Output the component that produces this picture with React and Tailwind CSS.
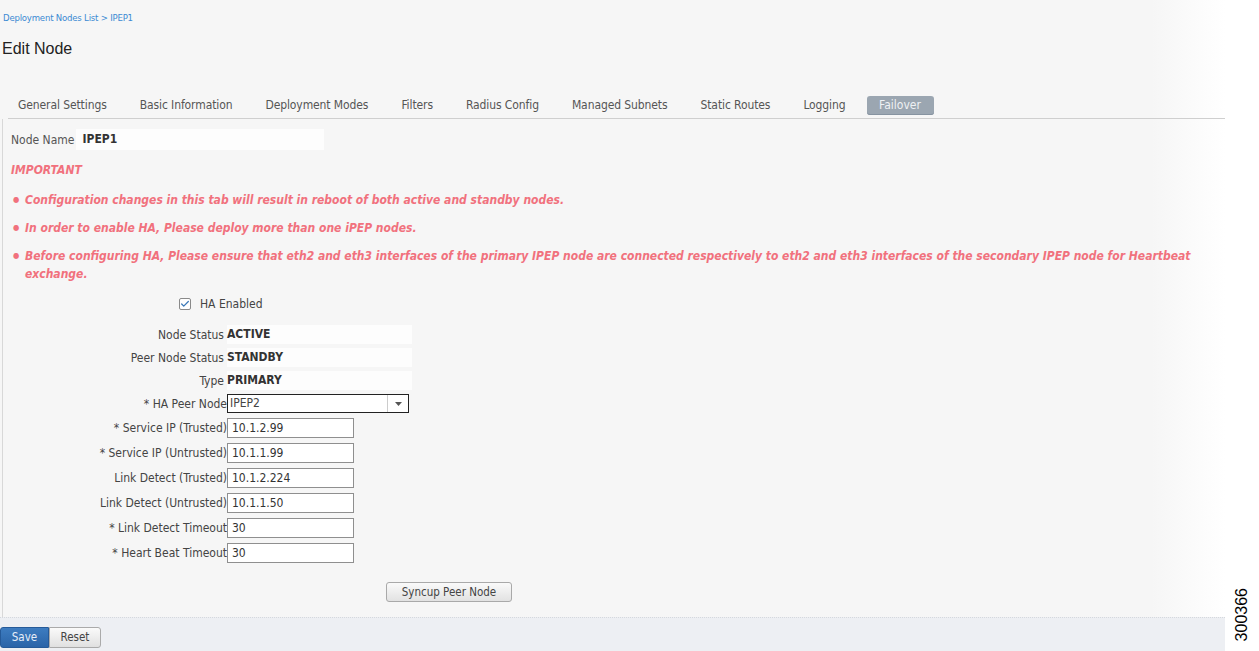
import { Check } from "lucide-react";

const tabs = [
  "General Settings",
  "Basic Information",
  "Deployment Modes",
  "Filters",
  "Radius Config",
  "Managed Subnets",
  "Static Routes",
  "Logging",
];

const notes = [
  "Configuration changes in this tab will result in reboot of both active and standby nodes.",
  "In order to enable HA, Please deploy more than one iPEP nodes.",
  "Before configuring HA, Please ensure that eth2 and eth3 interfaces of the primary IPEP node are connected respectively to eth2 and eth3 interfaces of the secondary IPEP node for Heartbeat exchange.",
];

const statusRows = [
  ["Node Status", "ACTIVE"],
  ["Peer Node Status", "STANDBY"],
  ["Type", "PRIMARY"],
];

const inputRows = [
  ["* Service IP (Trusted)", "10.1.2.99"],
  ["* Service IP (Untrusted)", "10.1.1.99"],
  ["Link Detect (Trusted)", "10.1.2.224"],
  ["Link Detect (Untrusted)", "10.1.1.50"],
  ["* Link Detect Timeout", "30"],
  ["* Heart Beat Timeout", "30"],
];

const font = { fontFamily: '"DejaVu Sans Condensed", "DejaVu Sans", sans-serif' };

export default function App() {
  return (
    <div
      className="w-[1259px] h-[651px] overflow-hidden flex bg-white text-[12px] text-[#444]"
      style={font}
    >
      <div className="flex-1 flex flex-col bg-[linear-gradient(to_right,#f6f6f6_0%,#f6f6f6_94%,#ffffff_100%)]">
        <div className="pl-[3px] pt-[11px] text-[9.5px] text-[#3b8ad3] tracking-[-0.2px]">
          Deployment Nodes List &gt; IPEP1
        </div>
        <h1
          className="pl-[2px] mt-[16px] text-[16px] text-[#222] leading-none"
          style={{ fontFamily: '"Liberation Sans", Arial, sans-serif' }}
        >
          Edit Node
        </h1>

        <div className="mt-[39px] ml-[8px] pl-[10px] flex items-end gap-[33px] border-b border-[#cfcfcf] h-[23px]">
          {tabs.map((t) => (
            <div key={t} className="h-[19px] leading-[19px] text-[12px] text-[#555] mb-[3px] tracking-[-0.1px]">
              {t}
            </div>
          ))}
          <div className="-ml-[12px] w-[67px] text-center h-[19px] leading-[19px] mb-[3px] rounded-[3px] bg-[#9ba6b1] text-[12px] text-[#eef1f4] shadow-[inset_0_-1px_0_#8693a0]">
            Failover
          </div>
        </div>

        <div className="flex-1 ml-[2px] border-l border-[#d8d8d8] pl-[8px] pt-[10px]">
          <div className="flex items-center h-[21px]">
            <span className="text-[#555]">Node Name</span>
            <span className="ml-[2px] w-[248px] h-[21px] leading-[21px] bg-[#fdfdfd] pl-[6px] font-bold text-[#333]">IPEP1</span>
          </div>

          <div className="mt-[11px] italic font-bold text-[#f1717d]">IMPORTANT</div>
          <ul className="mt-[12px] text-[#f1717d] italic font-bold pr-[4px]">
            {notes.map((n) => (
              <li key={n} className="flex mb-[10px] leading-[18px]">
                <span className="w-[14px] shrink-0 not-italic text-[8px] pl-[2px] leading-[18px]">●</span>
                <span>{n}</span>
              </li>
            ))}
          </ul>

          <div className="mt-[13px] flex items-center ml-[168px] h-[16px]">
            <span className="w-[12px] h-[12px] border border-[#8a8a8a] bg-white rounded-[2px] flex items-center justify-center">
              <Check size={10} strokeWidth={3} className="text-[#3a78b8]" />
            </span>
            <span className="ml-[9px] text-[#444]">HA Enabled</span>
          </div>

          <div className="mt-[11px] flex flex-col">
            {statusRows.map(([l, v]) => (
              <div key={l} className="flex items-center h-[23px]">
                <span className="w-[216px] text-right pr-[3px]">{l}</span>
                <span className="w-[185px] h-[19px] leading-[19px] bg-[#fdfdfd] font-bold text-[#333]">{v}</span>
              </div>
            ))}
            <div className="flex items-center h-[23px]">
              <span className="w-[216px] text-right">* HA Peer Node</span>
              <div className="w-[182px] h-[19px] border border-[#222] bg-white flex items-center">
                <span className="flex-1 pl-[2px] leading-[17px]">IPEP2</span>
                <span className="w-[21px] h-[17px] border-l border-[#ccc] flex items-center justify-center">
                  <svg width="7" height="4" viewBox="0 0 7 4"><path d="M0 0h7L3.5 4z" fill="#555" /></svg>
                </span>
              </div>
            </div>
            <div>
              {inputRows.map(([l, v]) => (
                <div key={l} className="flex items-center h-[25px]">
                  <span className="w-[216px] text-right">{l}</span>
                  <span className="w-[127px] h-[20px] leading-[18px] border border-[#8f8f8f] bg-white pl-[4px] text-[#333]">{v}</span>
                </div>
              ))}
            </div>
            <div className="mt-[17px] ml-[375px]">
              <button className="h-[20px] w-[126px] border border-[#a9a9a9] rounded-[3px] bg-[linear-gradient(#fafafa,#e2e2e2)] text-[11.5px] text-[#444]">
                Syncup Peer Node
              </button>
            </div>
          </div>
        </div>

        <div className="h-[34px] bg-[#edeff3] border-t border-dotted border-[#d5d8dd] flex items-end pb-[3px]">
          <button className="h-[21px] w-[49px] rounded-l-[3px] bg-[linear-gradient(#3d7cc0,#2a64a8)] text-[#e6eef8] text-[11.5px] border border-[#255a99]">
            Save
          </button>
          <button className="h-[21px] w-[52px] rounded-r-[3px] bg-[linear-gradient(#fafafa,#e0e0e0)] text-[#444] text-[11.5px] border border-[#aaa]">
            Reset
          </button>
        </div>
      </div>
      <div className="w-[34px] flex flex-col justify-end items-center pb-[10px]">
        <span
          className="[writing-mode:vertical-rl] rotate-180 text-[16px] text-black"
          style={{ fontFamily: '"Liberation Sans", Arial, sans-serif' }}
        >
          300366
        </span>
      </div>
    </div>
  );
}
